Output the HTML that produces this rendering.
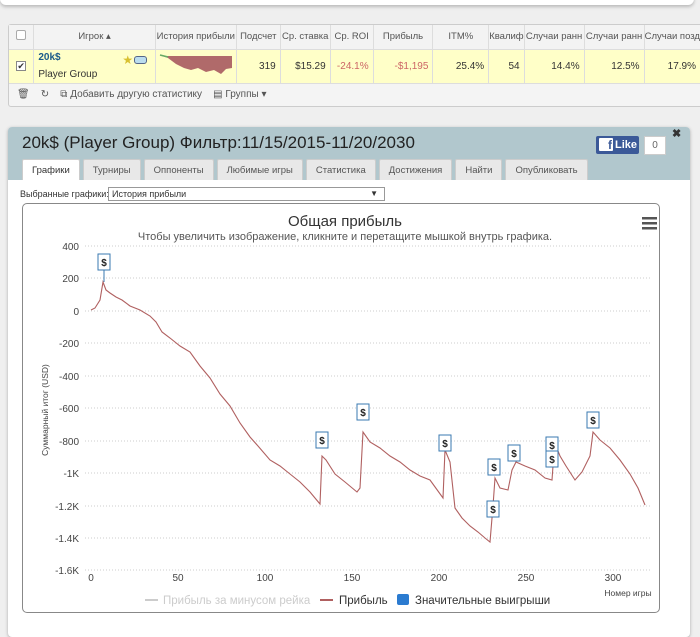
<!DOCTYPE html>
<html><head><meta charset="utf-8"><style>
*{box-sizing:border-box;margin:0;padding:0}
body{width:700px;height:626px;background:#efefef;font-family:"Liberation Sans",sans-serif;position:relative;overflow:hidden;font-size:10px;color:#333}
.top{position:absolute;left:0;top:-10px;width:694px;height:15px;background:#fff;border-radius:0 0 6px 6px;box-shadow:0 2px 3px #bbb}
.tbl{position:absolute;left:8px;top:24px;width:700px;height:83px;background:#f4f4f4;border:1px solid #ccc;border-radius:3px}
table{border-collapse:collapse;position:absolute;left:0;top:0;width:692px;font-size:9.5px}
td{border-right:1px solid #ddd;white-space:nowrap;overflow:hidden}
tr.h td{height:24px;text-align:center;color:#555;background:#f3f3f3;border-bottom:1px solid #ddd}
tr.d td{height:32px;background:#ffffc8;text-align:right;padding-right:4px;color:#333;font-size:10px;border-bottom:1px solid #ddd}
.foot{position:absolute;left:8px;top:64px;font-size:10px;color:#555}
.panel{position:absolute;left:8px;top:127px;width:682px;height:510px;background:#fff;border-radius:4px;box-shadow:0 1px 3px #aaa}
.ph{height:53px;background:#b1c7cd;border-radius:4px 4px 0 0;position:relative}
.title{position:absolute;left:14px;top:6px;font-size:17px;color:#222}
.tabs{position:absolute;left:14px;top:32px;display:flex;gap:3px}
.tab{height:21px;padding:0 9px;line-height:21px;font-size:9.5px;color:#555;background:#e8e8e8;border:1px solid #ccc;border-bottom:none;border-radius:2px 2px 0 0}
.tab.a{background:#fff;color:#333}
.fb{position:absolute;left:588px;top:9px;width:43px;height:18px;background:#3b5998;color:#fff;font-weight:bold;font-size:11px;line-height:18px;padding-left:19px;border-radius:2px}
.fb:before{content:"f";position:absolute;left:3px;top:2px;width:13px;height:13px;background:#fff;color:#3b5998;line-height:15px;text-align:right;padding-right:1px;font-size:12px;border-radius:1px}
.cnt{position:absolute;left:636px;top:9px;width:22px;height:19px;background:#fff;border:1px solid #ccc;font-size:10px;text-align:center;line-height:17px;color:#666}
</style></head><body>
<div class="top"></div>
<div class="tbl">
<table>
<tr class="h"><td style="width:25px"><span style="display:inline-block;width:10px;height:10px;border:1px solid #aaa;border-radius:2px;background:#fff"></span></td><td style="width:122px">Игрок ▴</td><td style="width:81px">История прибыли</td><td style="width:44px">Подсчет</td><td style="width:50px">Ср. ставка</td><td style="width:43px">Ср. ROI</td><td style="width:60px">Прибыль</td><td style="width:56px">ITM%</td><td style="width:35px">Квалиф</td><td style="width:60px">Случаи ранн</td><td style="width:60px">Случаи ранн</td><td style="width:56px">Случаи позд</td></tr>
<tr class="d"><td style="text-align:center;padding:0"><span style="display:inline-block;width:10px;height:10px;border:1px solid #888;background:#fff;font-size:9px;line-height:9px">✔</span></td>
<td style="text-align:left;padding-left:4px;position:relative"><div style="color:#1a5a8a;font-weight:bold;font-size:10px">20k$</div><div style="margin-top:6px">Player Group</div><span style="position:absolute;left:88px;top:3px;color:#d8c030;font-size:12px">★</span><span style="position:absolute;left:100px;top:6px;width:13px;height:8px;border:1px solid #568;border-radius:3px;background:#bde"></span></td>
<td style="padding:0"><svg width="80" height="30"><path d="M6 6 L12 8 L20 14 L28 18 L35 20 L42 18 L50 22 L58 20 L65 24 L70 19 L76 18 L76 6 Z" fill="#b06a6a"/><path d="M4 5 L12 7" stroke="#6a6" stroke-width="1.5"/></svg></td>
<td>319</td><td>$15.29</td><td style="color:#c66">-24.1%</td><td style="color:#c66">-$1,195</td><td>25.4%</td><td>54</td><td>14.4%</td><td>12.5%</td><td>17.9%</td></tr>
</table>
<div class="foot">🗑&nbsp;&nbsp;&nbsp; ↻&nbsp;&nbsp;&nbsp; ⧉ Добавить другую статистику &nbsp;&nbsp;&nbsp;▤ Группы ▾</div>
</div>
<div class="panel">
<div class="ph"><div class="title">20k$ (Player Group) Фильтр:11/15/2015-11/20/2030</div>
<div class="fb">Like</div><div class="cnt">0</div>
<div style="position:absolute;left:664px;top:0;font-size:11px;font-weight:bold">✖</div>
<div class="tabs"><div class="tab a">Графики</div><div class="tab">Турниры</div><div class="tab">Оппоненты</div><div class="tab">Любимые игры</div><div class="tab">Статистика</div><div class="tab">Достижения</div><div class="tab">Найти</div><div class="tab">Опубликовать</div></div>
</div>
<div style="position:absolute;left:12px;top:62px;font-size:9px">Выбранные графики:</div>
<div style="position:absolute;left:100px;top:60px;width:277px;height:14px;border:1px solid #999;font-size:9px;padding-left:3px;line-height:12px">История прибыли<span style="position:absolute;right:6px;font-size:8px">▼</span></div>
<div style="position:absolute;left:14px;top:76px;width:638px;height:410px;border:1px solid #888;border-radius:5px"></div>
</div>
<svg style="position:absolute;left:0;top:0" width="700" height="626" font-family="Liberation Sans,sans-serif">
<text x="345" y="226" font-size="15" fill="#333" text-anchor="middle">Общая прибыль</text>
<text x="345" y="240" font-size="11" fill="#555" text-anchor="middle">Чтобы увеличить изображение, кликните и перетащите мышкой внутрь графика.</text>
<g fill="#555"><rect x="642" y="217" width="15" height="2.5"/><rect x="642" y="222" width="15" height="2.5"/><rect x="642" y="227" width="15" height="2.5"/></g>
<g stroke="#ccc" stroke-dasharray="1,2">
<line x1="85" y1="246" x2="652" y2="246"/><line x1="85" y1="278" x2="652" y2="278"/><line x1="85" y1="311" x2="652" y2="311"/><line x1="85" y1="343" x2="652" y2="343"/><line x1="85" y1="376" x2="652" y2="376"/><line x1="85" y1="408" x2="652" y2="408"/><line x1="85" y1="441" x2="652" y2="441"/><line x1="85" y1="473" x2="652" y2="473"/><line x1="85" y1="506" x2="652" y2="506"/><line x1="85" y1="538" x2="652" y2="538"/><line x1="85" y1="570" x2="652" y2="570"/></g>
<g font-size="10" fill="#444" text-anchor="end"><text x="79" y="250">400</text><text x="79" y="282">200</text><text x="79" y="315">0</text><text x="79" y="347">-200</text><text x="79" y="380">-400</text><text x="79" y="412">-600</text><text x="79" y="445">-800</text><text x="79" y="477">-1K</text><text x="79" y="510">-1.2K</text><text x="79" y="542">-1.4K</text><text x="79" y="574">-1.6K</text></g>
<g font-size="10" fill="#444" text-anchor="middle"><text x="91" y="581">0</text><text x="178" y="581">50</text><text x="265" y="581">100</text><text x="352" y="581">150</text><text x="439" y="581">200</text><text x="526" y="581">250</text><text x="613" y="581">300</text></g>
<text x="48" y="410" font-size="8.5" fill="#444" text-anchor="middle" transform="rotate(-90 48 410)">Суммарный итог (USD)</text>
<text x="628" y="596" font-size="8.5" fill="#444" text-anchor="middle">Номер игры</text>
<g font-size="11.5"><line x1="145" y1="600" x2="158" y2="600" stroke="#ccc" stroke-width="2"/><text x="163" y="604" fill="#ccc">Прибыль за минусом рейка</text>
<line x1="320" y1="600" x2="333" y2="600" stroke="#b06060" stroke-width="2"/><text x="339" y="604" fill="#333">Прибыль</text>
<rect x="397" y="594" width="12" height="11" rx="2" fill="#2b7bd0"/><text x="415" y="604" fill="#333">Значительные выигрыши</text></g>
<path fill="none" stroke="#b06060" stroke-width="1.1" d="M91 310 L95 308 L100 300 L103 282 L106 290 L110 293 L116 297 L122 300 L130 306 L140 310 L150 316 L156 322 L162 332 L170 338 L180 346 L190 352 L200 366 L210 378 L220 394 L230 406 L240 423 L250 437 L258 446 L270 460 L280 466 L290 474 L300 482 L310 492 L320 504 L322 456 L326 460 L335 474 L345 482 L357 492 L360 488 L363 432 L370 442 L380 448 L390 456 L400 462 L410 470 L420 476 L430 480 L443 498 L445 450 L450 462 L455 508 L462 518 L470 526 L478 532 L485 538 L490 542 L493 506 L495 478 L500 488 L508 490 L512 470 L516 462 L525 466 L535 470 L545 478 L552 480 L553 466 L556 446 L560 456 L566 466 L575 480 L582 472 L590 456 L593 432 L600 440 L610 448 L620 460 L630 474 L638 488 L645 505"/>
<g font-size="10" font-weight="bold" fill="#222" text-anchor="middle">
<g><line x1="104" y1="270" x2="104" y2="282" stroke="#3a7ab0"/><rect x="98" y="254" width="12" height="16" fill="#fff" stroke="#3a7ab0"/><text x="104" y="266">$</text></g>
<g><rect x="316" y="432" width="12" height="16" fill="#fff" stroke="#3a7ab0"/><text x="322" y="444">$</text></g>
<g><rect x="357" y="404" width="12" height="16" fill="#fff" stroke="#3a7ab0"/><text x="363" y="416">$</text></g>
<g><rect x="439" y="435" width="12" height="16" fill="#fff" stroke="#3a7ab0"/><text x="445" y="447">$</text></g>
<g><rect x="488" y="459" width="12" height="16" fill="#fff" stroke="#3a7ab0"/><text x="494" y="471">$</text></g>
<g><rect x="487" y="501" width="12" height="16" fill="#fff" stroke="#3a7ab0"/><text x="493" y="513">$</text></g>
<g><rect x="508" y="445" width="12" height="16" fill="#fff" stroke="#3a7ab0"/><text x="514" y="457">$</text></g>
<g><rect x="546" y="437" width="12" height="16" fill="#fff" stroke="#3a7ab0"/><text x="552" y="449">$</text></g>
<g><rect x="546" y="451" width="12" height="16" fill="#fff" stroke="#3a7ab0"/><text x="552" y="463">$</text></g>
<g><rect x="587" y="412" width="12" height="16" fill="#fff" stroke="#3a7ab0"/><text x="593" y="424">$</text></g>
</g>
</svg>
</body></html>
